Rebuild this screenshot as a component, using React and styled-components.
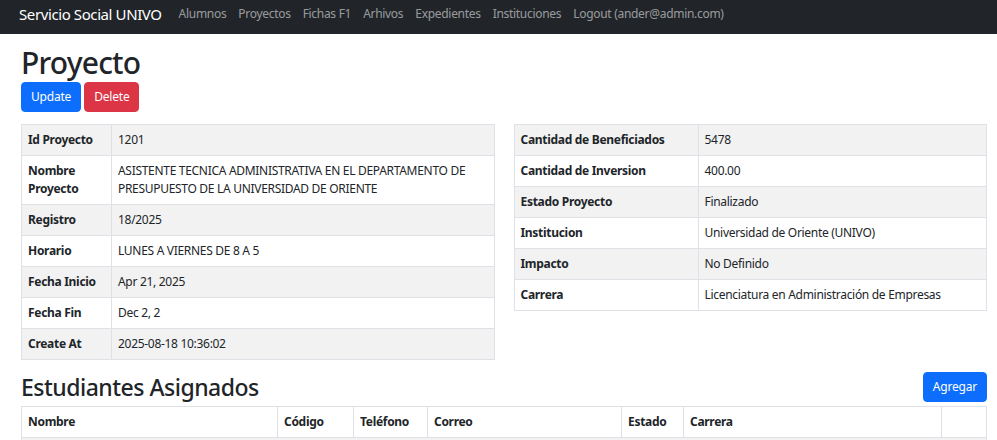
import styled, { createGlobalStyle } from "styled-components";

const GlobalStyle = createGlobalStyle`
	* { box-sizing: border-box; }
	body {
		margin: 0;
		font-family: "Noto Sans", "Liberation Sans", sans-serif;
		font-size: 12px;
		line-height: 18px;
		letter-spacing: -0.3px;
		color: #212529;
		background: #fff;
	}
`

const Navbar = styled.nav`
	height: 34px;
	background: #212529;
	display: flex;
	align-items: flex-start;
	padding: 3px 0 0 19px;
`

const Brand = styled.span`
	color: #fff;
	font-size: 15px;
	line-height: 22px;
	letter-spacing: -0.4px;
	margin-right: 17px;
`

const NavLinks = styled.div`
	display: flex;
	gap: 12px;
	padding-top: 2px;
`

const NavLink = styled.a`
	color: rgba(255, 255, 255, 0.55);
	font-size: 12px;
	line-height: 18px;
	text-decoration: none;
`

const Main = styled.main`
	padding: 10px 10px 0 21px;
`

const Title = styled.h1`
	margin: 0;
	font-size: 30px;
	line-height: 38px;
	font-weight: 500;
	letter-spacing: -0.8px;
`

const ButtonRow = styled.div`
	display: flex;
	gap: 3px;
	margin-bottom: 12px;
`

const Button = styled.button`
	font-family: inherit;
	font-size: 12px;
	line-height: 18px;
	letter-spacing: -0.2px;
	padding: 5px 9px;
	border: 1px solid ${p => p.$color};
	border-radius: 4px;
	background: ${p => p.$color};
	color: #fff;
`

const Columns = styled.div`
	display: grid;
	grid-template-columns: 1fr 1fr;
	gap: 19px;
	align-items: start;
`

const Table = styled.table`
	width: 100%;
	border-collapse: collapse;
	table-layout: fixed;
`

const Row = styled.tr`
	background: ${p => (p.$odd ? "#f2f2f2" : "#fff")};
`

const Th = styled.th`
	border: 1px solid #dee2e6;
	padding: 6px;
	text-align: left;
	font-weight: 700;
	vertical-align: top;
	width: ${p => p.$w || "auto"};
`

const Td = styled.td`
	border: 1px solid #dee2e6;
	padding: 6px;
	vertical-align: top;
`

const SectionHead = styled.div`
	display: flex;
	justify-content: space-between;
	align-items: flex-end;
	margin-top: 12px;
	margin-bottom: 4px;
`

const SubTitle = styled.h2`
	margin: 0;
	font-size: 23px;
	line-height: 30px;
	font-weight: 500;
	letter-spacing: -0.5px;
`

const left = [
	["Id Proyecto", "1201"],
	["Nombre Proyecto", "ASISTENTE TECNICA ADMINISTRATIVA EN EL DEPARTAMENTO DE PRESUPUESTO DE LA UNIVERSIDAD DE ORIENTE"],
	["Registro", "18/2025"],
	["Horario", "LUNES A VIERNES DE 8 A 5"],
	["Fecha Inicio", "Apr 21, 2025"],
	["Fecha Fin", "Dec 2, 2"],
	["Create At", "2025-08-18 10:36:02"],
]

const right = [
	["Cantidad de Beneficiados", "5478"],
	["Cantidad de Inversion", "400.00"],
	["Estado Proyecto", "Finalizado"],
	["Institucion", "Universidad de Oriente (UNIVO)"],
	["Impacto", "No Definido"],
	["Carrera", "Licenciatura en Administración de Empresas"],
]

const cols = [
	["Nombre", "256px"],
	["Código", "76px"],
	["Teléfono", "74px"],
	["Correo", "194px"],
	["Estado", "62px"],
	["Carrera", "258px"],
	["", "auto"],
]

function InfoTable({ rows, labelWidth }) {
	return <Table>
		<tbody>
			{rows.map(([k, v], i) => (
				<Row key={k} $odd={i % 2 === 0}>
					<Th $w={labelWidth}>{k}</Th>
					<Td>{v}</Td>
				</Row>
			))}
		</tbody>
	</Table>
}

export default function App() {
	const links = ["Alumnos", "Proyectos", "Fichas F1", "Arhivos", "Expedientes", "Instituciones", "Logout (ander@admin.com)"]
	return <>
		<GlobalStyle />
		<Navbar>
			<Brand>Servicio Social UNIVO</Brand>
			<NavLinks>
				{links.map(l => <NavLink key={l} href="#">{l}</NavLink>)}
			</NavLinks>
		</Navbar>
		<Main>
			<Title>Proyecto</Title>
			<ButtonRow>
				<Button $color="#0d6efd">Update</Button>
				<Button $color="#dc3545">Delete</Button>
			</ButtonRow>
			<Columns>
				<InfoTable rows={left} labelWidth="90px" />
				<InfoTable rows={right} labelWidth="184px" />
			</Columns>
			<SectionHead>
				<SubTitle>Estudiantes Asignados</SubTitle>
				<Button $color="#0d6efd">Agregar</Button>
			</SectionHead>
			<Table>
				<thead>
					<tr>
						{cols.map(([c, w], i) => <Th key={i} $w={w}>{c}</Th>)}
					</tr>
				</thead>
				<tbody>
					<Row $odd><Td colSpan={7}>&nbsp;</Td></Row>
				</tbody>
			</Table>
		</Main>
	</>
}
